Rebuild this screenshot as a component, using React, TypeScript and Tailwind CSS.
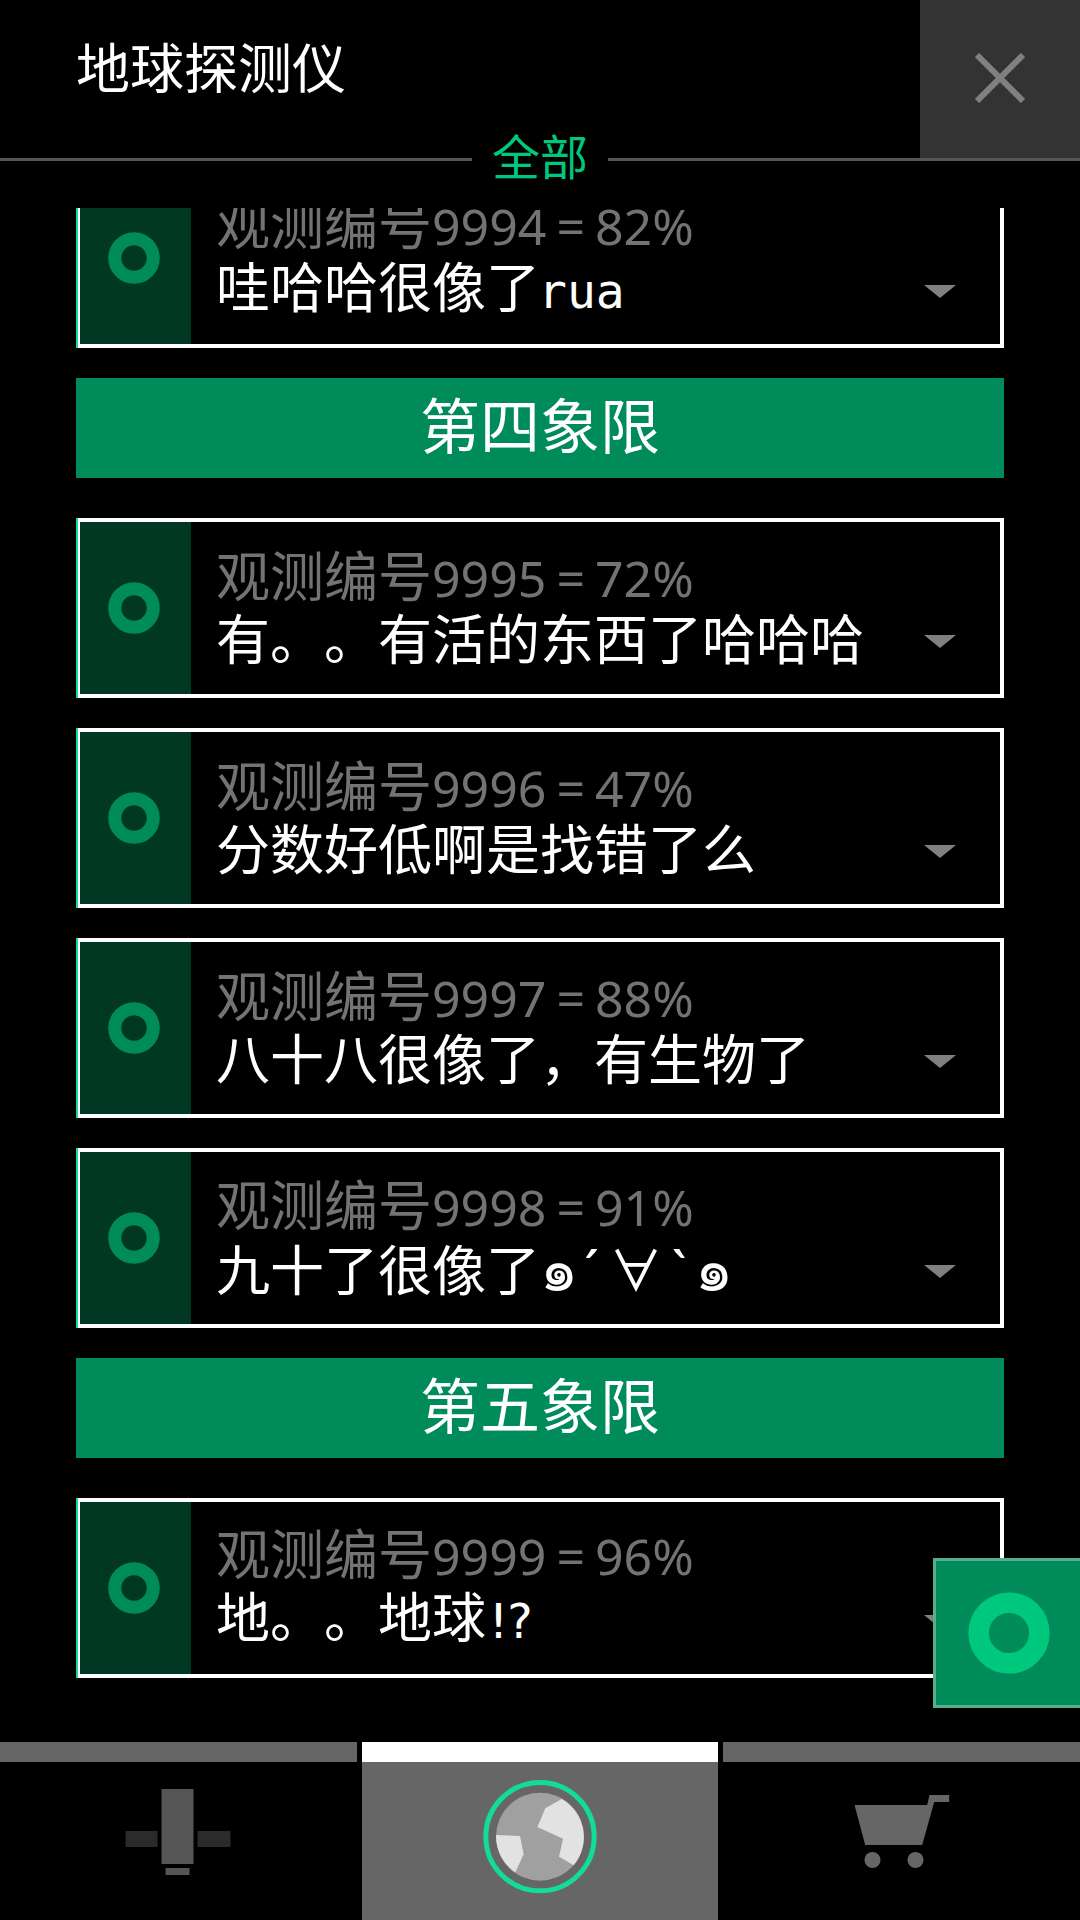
const items: any[] = [
  { type: "card", label: "9994 = 82%", text: "哇哈哈很像了", mono: "rua", monoClass: "-ml-[2px]" },
  { type: "head", text: "第四象限" },
  { type: "card", label: "9995 = 72%", text: "有。。有活的东西了哈哈哈" },
  { type: "card", label: "9996 = 47%", text: "分数好低啊是找错了么" },
  { type: "card", label: "9997 = 88%", text: "八十八很像了，有生物了" },
  { type: "card", label: "9998 = 91%", text: "九十了很像了", face: true },
  { type: "head", text: "第五象限" },
  { type: "card", label: "9999 = 96%", text: "地。。地球", mono: "!?", monoClass: "-ml-[2px] tracking-[-8px]" },
];

function Ring({ className }: { className: string }) {
  return (
    <svg viewBox="0 0 100 100" className={className}>
      <circle cx="50" cy="50" r="37" fill="none" stroke="currentColor" strokeWidth="25" />
    </svg>
  );
}

function Face() {
  return (
    <>
      <span className="inline-block w-[34px] text-center text-[60px]">๑</span>
      <span className="inline-block w-[35px] text-center">´</span>
      <span className="inline-block w-[54px] text-center">∀</span>
      <span className="inline-block w-[32px] text-center">`</span>
      <span className="inline-block w-[34px] text-center text-[60px]">๑</span>
    </>
  );
}

function Row({ item, first }: { item: any; first: boolean }) {
  if (item.type === "head") {
    return (
      <div className="mt-[30px] mb-[10px] h-[100px] pb-[4px] bg-[#008c5a] flex items-center justify-center text-[60px] text-white">
        {item.text}
      </div>
    );
  }
  return (
    <div className={`${first ? "" : "mt-[30px]"} h-[180px] border-l-2 border-[#12dc96]`}>
      <div className="h-full border-4 border-l-2 border-white flex">
        <div className="w-[111px] pr-[3px] bg-[#003823] flex items-center justify-center text-[#008c5a]">
          <Ring className="w-[52px] h-[52px]" />
        </div>
        <div className="flex-1 pl-[25px] flex flex-col justify-center text-[54px] leading-[61px] whitespace-nowrap [text-spacing-trim:space-all]">
          <div className="text-[#737373]">
            观测编号<span className="text-[50px] [word-spacing:-3px]">{item.label}</span>
          </div>
          <div className="text-white">
            {item.text}
            {item.face && <Face />}
            {item.mono && <span className={`font-['DejaVu_Sans_Mono'] text-[48px] ${item.monoClass}`}>{item.mono}</span>}
          </div>
        </div>
        <div className="mt-[113px] mr-[44px] w-0 h-0 border-x-[16px] border-t-[13px] border-x-transparent border-t-[#808080]" />
      </div>
    </div>
  );
}

export default function App() {
  return (
    <div className="relative w-[1080px] h-[1920px] overflow-hidden bg-black flex flex-col font-['Noto_Sans','Noto_Sans_CJK_SC',sans-serif]">
      {/* top bar */}
      <div className="h-[158px] flex">
        <div className="flex-1 pl-[76px] pt-[30px] text-[54px] leading-[76px] text-white">地球探测仪</div>
        <div className="w-[160px] pb-[2px] bg-[#333333] flex items-center justify-center">
          <svg viewBox="0 0 50 50" className="w-[50px] h-[50px]">
            <path d="M2 2 L48 48 M48 2 L2 48" stroke="#808080" strokeWidth="6" />
          </svg>
        </div>
      </div>
      <div className="h-[3px] flex items-center">
        <div className="flex-1 h-[3px] bg-[#555555]" />
        <div className="w-[136px] pb-[6px] text-center text-[48px] leading-[60px] text-[#00c87d]">全部</div>
        <div className="flex-1 h-[3px] bg-[#555555]" />
      </div>

      {/* list */}
      <div className="mt-[47px] flex-1 overflow-hidden px-[76px]">
        <div className="-mt-[40px] flex flex-col">
          {items.map((item, i) => (
            <Row key={i} item={item} first={i === 0} />
          ))}
        </div>
      </div>

      {/* floating button */}
      <div className="absolute left-[933px] top-[1558px] w-[150px] h-[150px] border-[3px] border-[#55ae8c] bg-[#008c5a] flex items-center justify-center text-[#00c87d] pl-[2px]">
        <Ring className="w-[82px] h-[82px]" />
      </div>

      {/* bottom nav */}
      <div className="h-[178px] flex gap-[5px]">
        <div className="flex-1 flex flex-col">
          <div className="h-[20px] bg-[#666666]" />
          <div className="flex-1 flex justify-center">
            <svg width="120" height="158" viewBox="118.5 1762 120 158">
              <rect x="162" y="1789" width="32" height="75" fill="#555555" />
              <rect x="126" y="1831" width="32" height="16" fill="#2b2b2b" />
              <rect x="198" y="1831" width="33" height="16" fill="#2b2b2b" />
              <rect x="166" y="1868" width="24" height="7" fill="#555555" />
            </svg>
          </div>
        </div>
        <div className="flex-1 flex flex-col">
          <div className="h-[20px] bg-white" />
          <div className="flex-1 bg-[#666666] flex justify-center">
            <svg width="120" height="158" viewBox="120 66 360 474">
              <circle cx="300" cy="290" r="162.5" fill="none" stroke="#12dc96" strokeWidth="15" />
              <circle cx="300" cy="290" r="132" fill="#a0a0a0" />
              <path d="M365 177 L316 205 L292 261 L369 296 L357 350 L401 376 A132 132 0 0 0 365 177 Z" fill="#e2e2e2" />
              <path d="M168 285 L240 288 L251 343 L226 397 A132 132 0 0 1 168 285 Z" fill="#e2e2e2" />
            </svg>
          </div>
        </div>
        <div className="flex-1 flex flex-col">
          <div className="h-[20px] bg-[#666666]" />
          <div className="flex-1 flex justify-center">
            <svg width="120" height="158" viewBox="841.5 1762 120 158">
              <path d="M854 1805 L926.7 1805 L929 1795 L948.7 1795 L948.7 1802 L933.7 1802 L921.7 1845 L864.7 1845 Z" fill="#666666" />
              <circle cx="872" cy="1860" r="8" fill="#666666" />
              <circle cx="915" cy="1860" r="8" fill="#666666" />
            </svg>
          </div>
        </div>
      </div>
    </div>
  );
}
